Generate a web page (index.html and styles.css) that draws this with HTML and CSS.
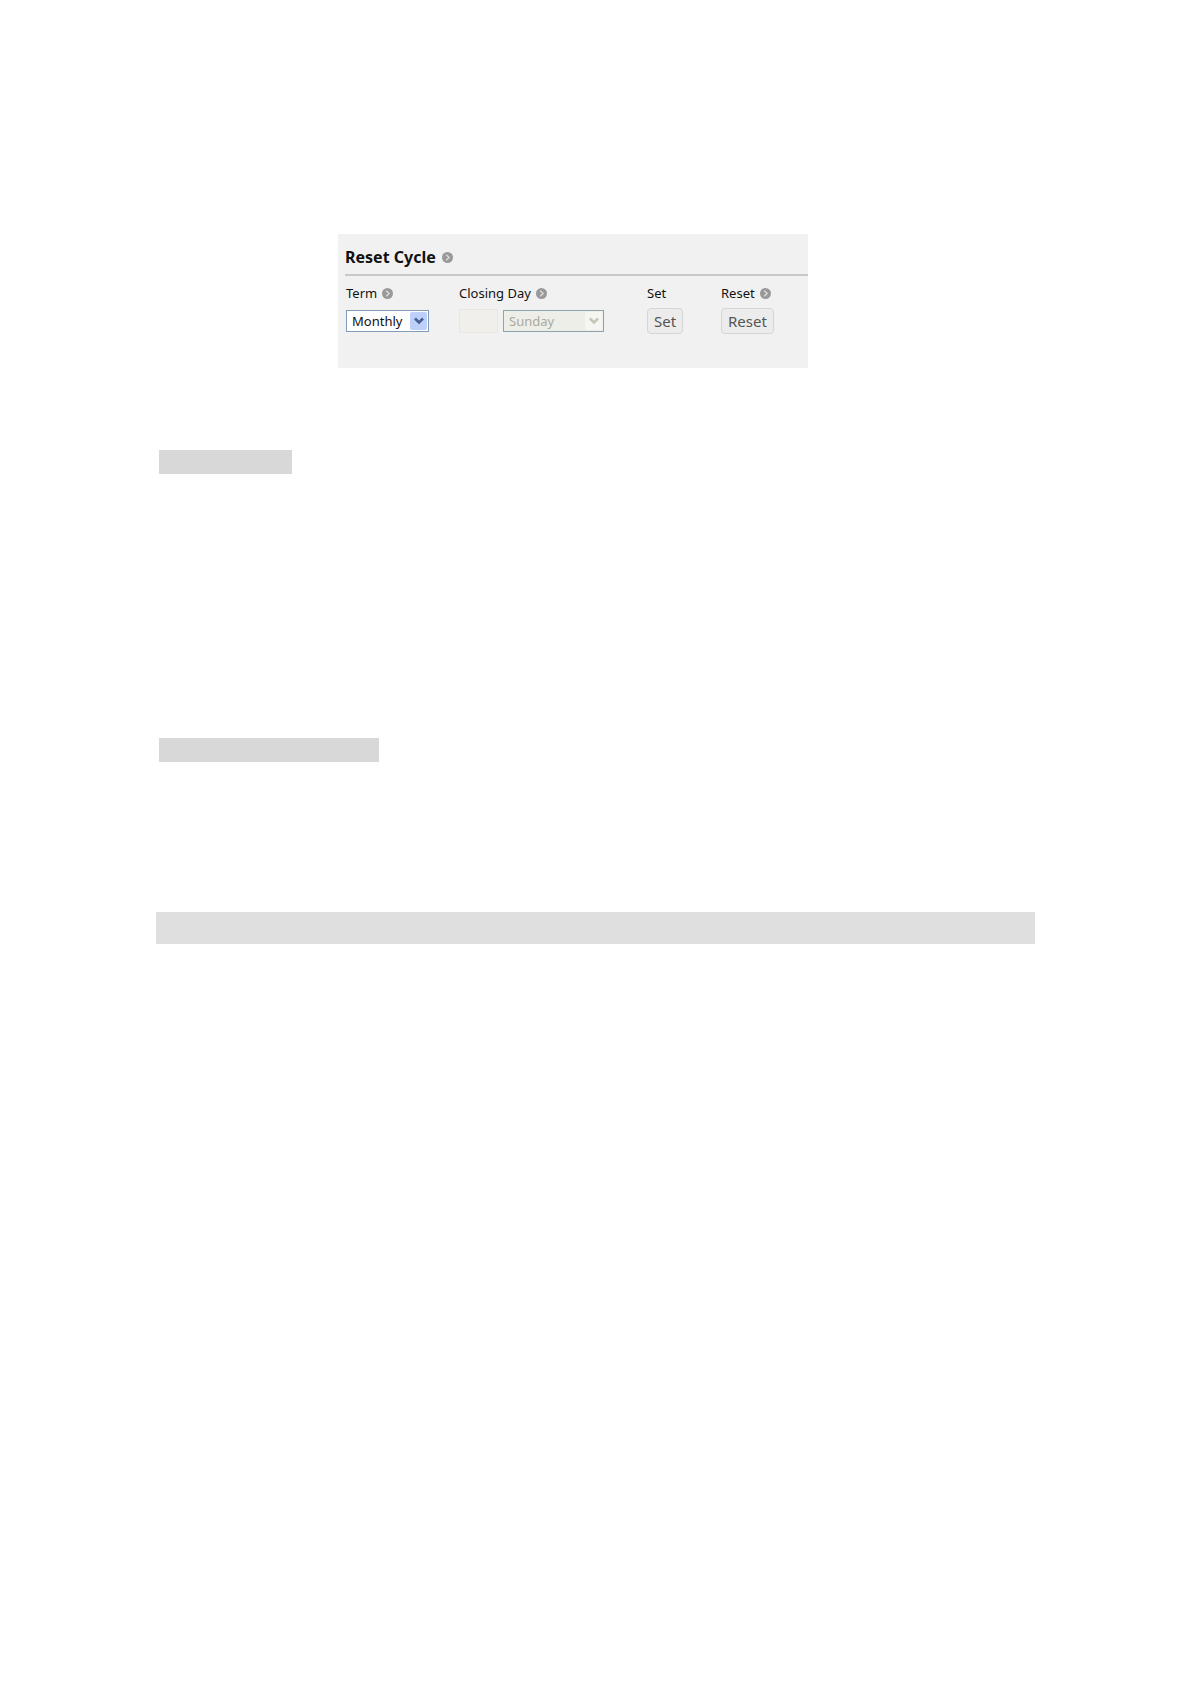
FILE: index.html
```html
<!DOCTYPE html>
<html lang="en">
<head>
<meta charset="utf-8">
<meta name="viewport" content="width=device-width, initial-scale=1">
<title>Reset Cycle</title>
<link rel="stylesheet" href="styles.css">
</head>
<body>
<svg class="symbols" aria-hidden="true">
  <symbol id="info" viewBox="0 0 10 10">
    <circle cx="5" cy="5" r="5" fill="#999"/>
    <path d="M3.8 2.5 6.5 5 3.8 7.5" fill="none" stroke="#dcdcdc" stroke-width="1.2"/>
  </symbol>
  <symbol id="chevron" viewBox="0 0 10 8">
    <path d="M1 1.5 5 5.5 9 1.5" fill="none" stroke="currentColor" stroke-width="2.6"/>
  </symbol>
</svg>
<main class="page">
  <form class="panel">
    <h1 class="panel-title">Reset Cycle <svg class="info"><use href="#info"/></svg></h1>
    <div class="fields">
      <div class="field">
        <label class="label" for="term">Term <svg class="info"><use href="#info"/></svg></label>
        <div class="controls">
          <div class="select term">
            <select id="term"><option>Monthly</option><option>Weekly</option></select>
            <span class="arrow"><svg class="chevron"><use href="#chevron"/></svg></span>
          </div>
        </div>
      </div>
      <div class="field">
        <label class="label" for="day">Closing Day <svg class="info"><use href="#info"/></svg></label>
        <div class="controls">
          <input class="day" id="day" type="text" disabled>
          <div class="select weekday disabled">
            <select aria-label="Closing weekday" disabled><option>Sunday</option></select>
            <span class="arrow"><svg class="chevron"><use href="#chevron"/></svg></span>
          </div>
        </div>
      </div>
      <div class="field">
        <label class="label" for="set">Set</label>
        <div class="controls"><button class="button" id="set" type="button">Set</button></div>
      </div>
      <div class="field">
        <label class="label" for="reset">Reset <svg class="info"><use href="#info"/></svg></label>
        <div class="controls"><button class="button" id="reset" type="button">Reset</button></div>
      </div>
    </div>
  </form>
  <div class="mark mark-short"></div>
  <div class="mark mark-long"></div>
  <div class="band"></div>
</main>
</body>
</html>
```
FILE: styles.css
```css
* {
  box-sizing: border-box;
}

body {
  margin: 0;
  background: #fff;
  color: #111;
  font: 13px/20px "Noto Sans", sans-serif;
}

.symbols {
  display: none;
}

.page {
  padding: 234px 156px 80px;
}

.panel {
  max-width: 470px;
  margin: 0 0 82px 182px;
  padding: 12px 0 34px 7px;
  background: #f1f1f1;
}

.panel-title {
  display: flex;
  align-items: center;
  gap: 6px;
  margin: 0;
  padding-bottom: 6px;
  border-bottom: 2px solid #c8c8c8;
  font-size: 16px;
  font-weight: 700;
  line-height: 22px;
}

.info {
  flex: none;
  width: 11px;
  height: 11px;
}

.fields {
  display: grid;
  grid-template-columns: 113px 188px 74px 1fr;
  padding: 7px 0 0 1px;
}

.label {
  display: flex;
  align-items: center;
  gap: 5px;
  height: 20px;
}

.controls {
  display: flex;
  align-items: center;
  gap: 5px;
  height: 26px;
  margin-top: 5px;
}

.select {
  display: flex;
  height: 22px;
  border: 1px solid #7f9db9;
  background: #fff;
}

.term {
  width: 83px;
}

.weekday {
  width: 101px;
}

.select select {
  flex: 1;
  min-width: 0;
  padding: 0 0 0 5px;
  border: 0;
  appearance: none;
  background: transparent;
  color: #111;
  font: inherit;
  opacity: 1;
}

.arrow {
  display: grid;
  place-items: center;
  width: 17px;
  margin: 1px;
  border-radius: 2px;
  background: #bdd0fa;
  color: #465f91;
}

.chevron {
  width: 10px;
  height: 8px;
}

.disabled {
  border-color: #8ca5ad;
  background: #eeeee8;
}

.select.disabled select {
  color: #aaa99d;
}

.disabled .arrow {
  background: #f5f5f1;
  color: #c6c6b9;
}

.day {
  width: 39px;
  height: 24px;
  border: 1px solid #e8e6df;
  border-radius: 2px;
  background: #f0efeb;
}

.button {
  height: 26px;
  padding: 0 6px;
  border: 1px solid #d5d5d5;
  border-radius: 4px;
  background: #ececec;
  color: #555;
  font: 15px/22px "Noto Sans", sans-serif;
}

.mark {
  height: 24px;
  margin-left: 3px;
  background: #d8d8d8;
}

.mark-short {
  width: 133px;
}

.mark-long {
  width: 220px;
  margin-top: 264px;
}

.band {
  height: 32px;
  margin-top: 150px;
  background: #dfdfdf;
}
```
